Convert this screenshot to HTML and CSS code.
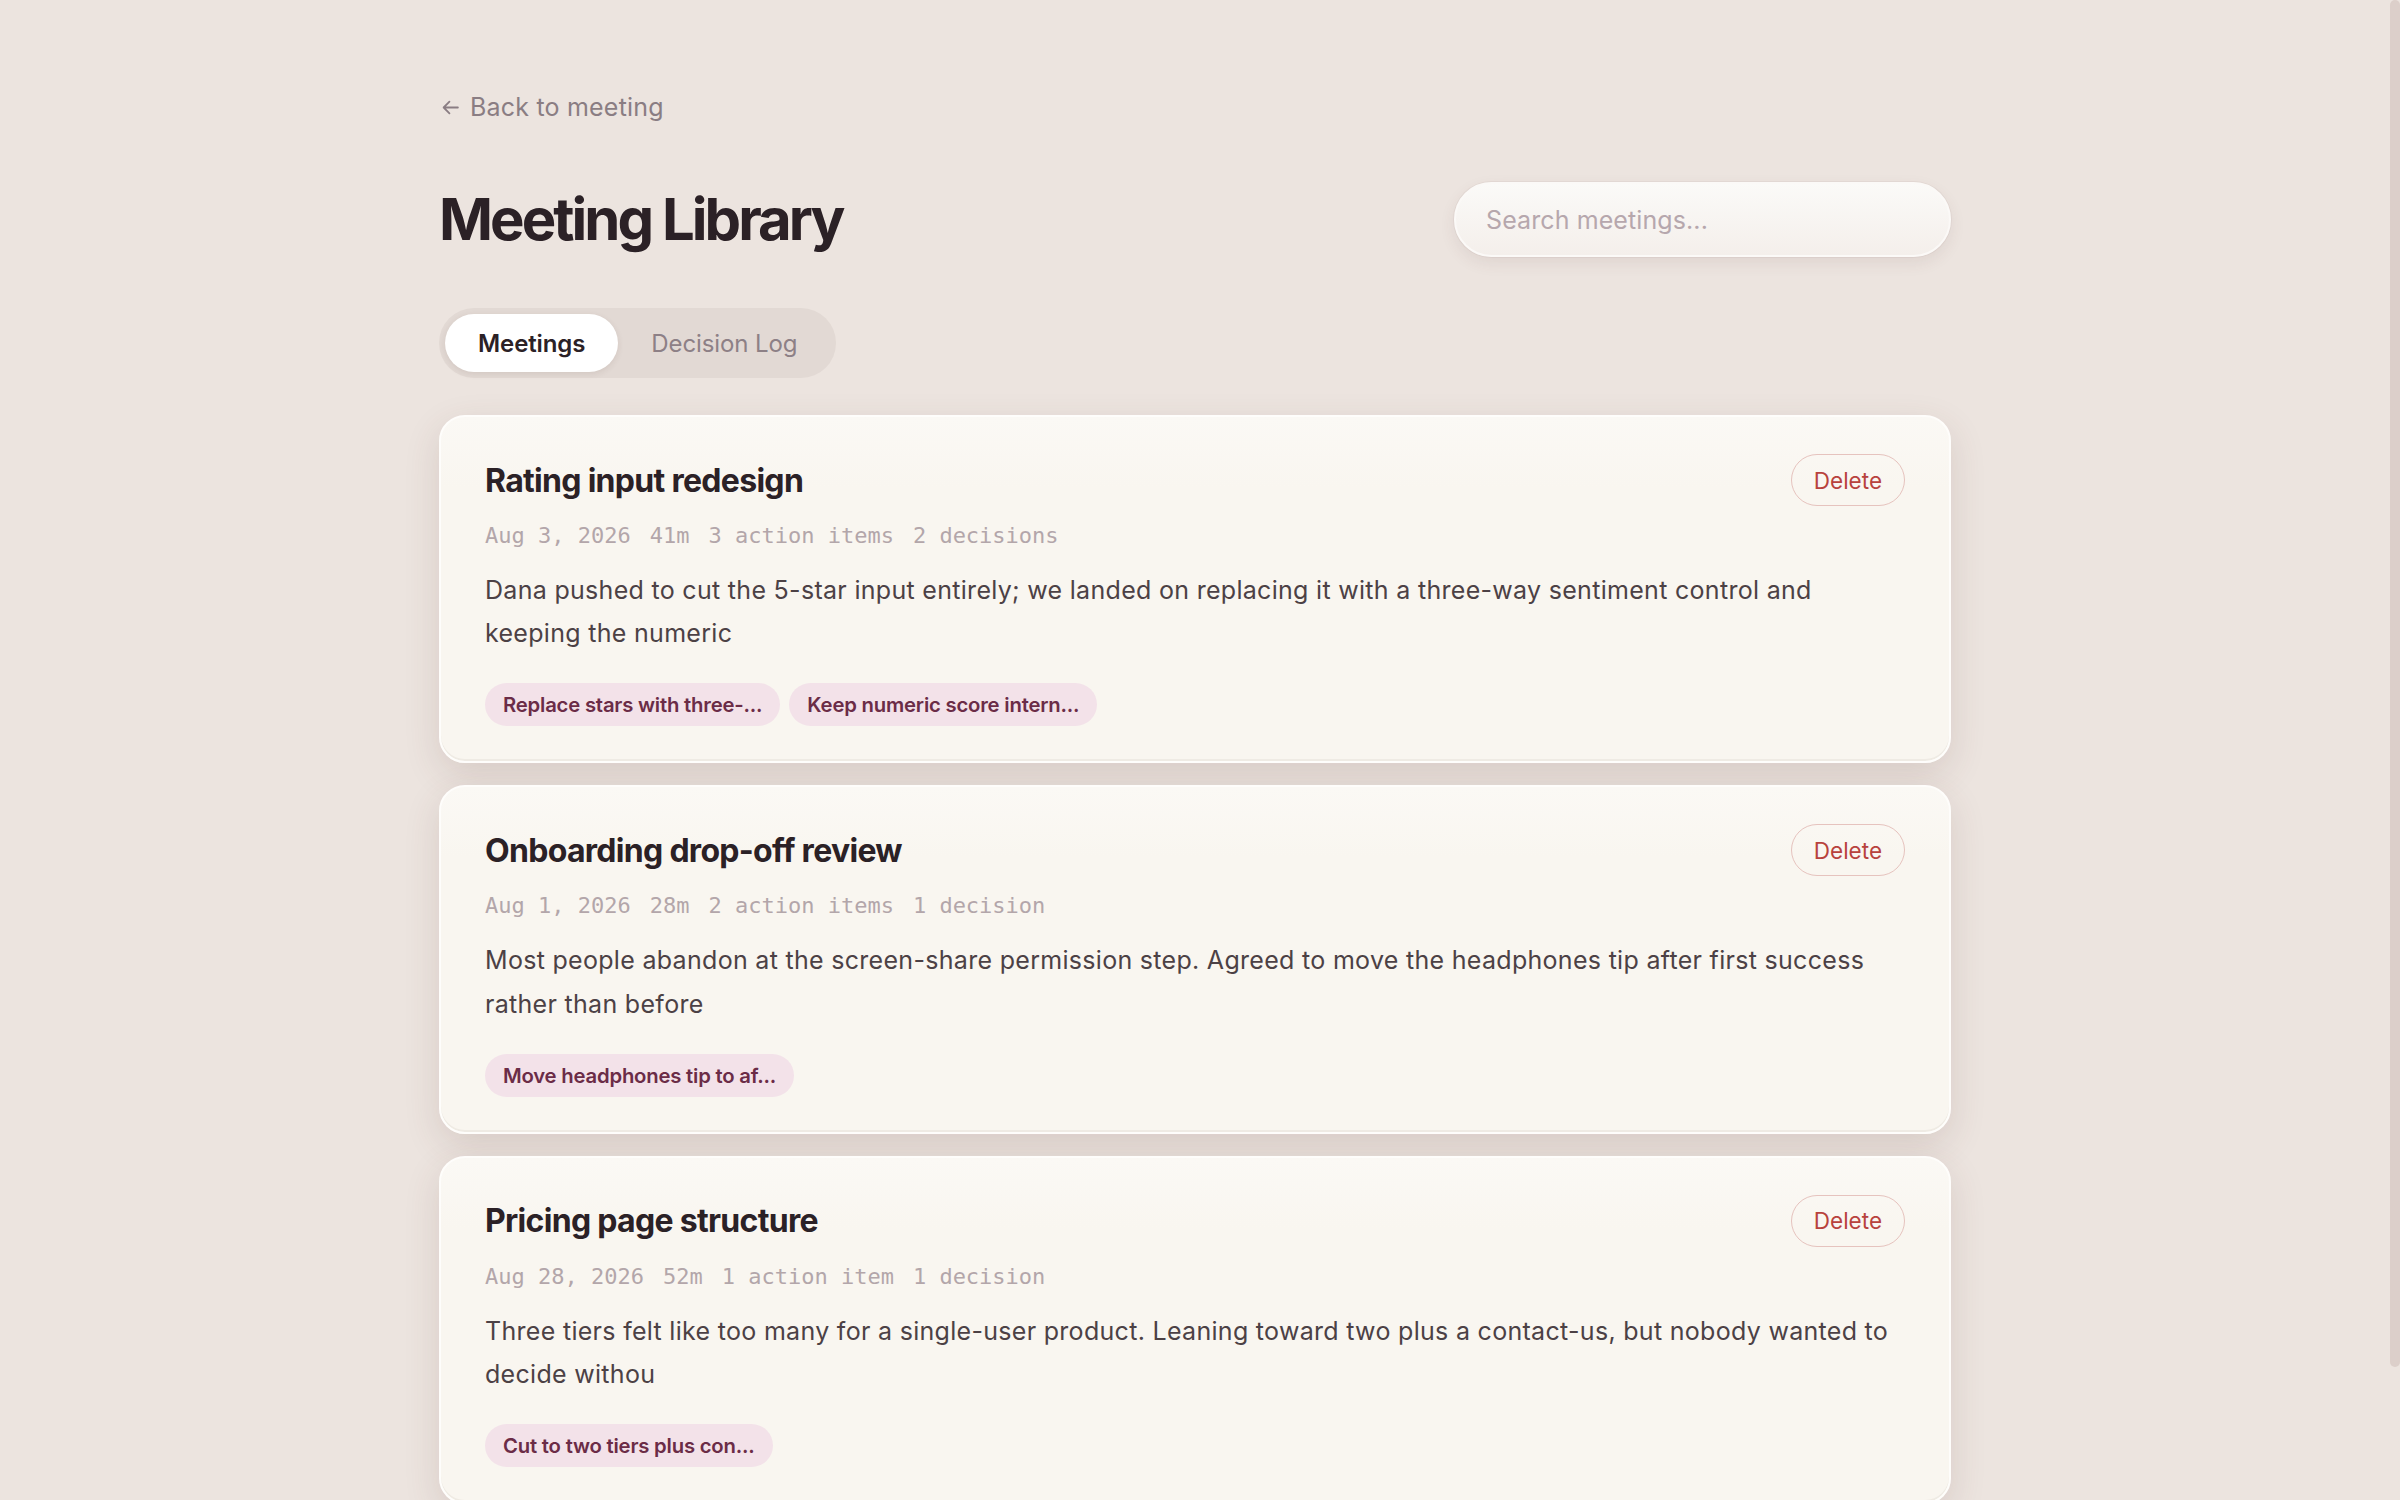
FILE: index.html
```html
<!DOCTYPE html>
<html lang="en">
<head>
<meta charset="utf-8">
<title>Meeting Library</title>
<link rel="stylesheet" href="styles.css">
</head>
<body>
<div class="scroll-thumb" aria-hidden="true"></div>
<main class="page">
  <a class="back-link" href="#">
    <svg class="back-icon" viewBox="0 0 18 18" aria-hidden="true"><path d="M16 9H2.5M8 3.5L2.5 9L8 14.5" fill="none" stroke="currentColor" stroke-width="1.7" stroke-linecap="round" stroke-linejoin="round"/></svg>
    <span>Back to meeting</span>
  </a>

  <header class="header">
    <h1 class="title">Meeting Library</h1>
    <input class="search" type="text" placeholder="Search meetings...">
  </header>

  <nav class="tabs">
    <button class="tab tab-active">Meetings</button>
    <button class="tab">Decision Log</button>
  </nav>

  <section class="list">
    <article class="card">
      <div class="card-head">
        <h2 class="card-title">Rating input redesign</h2>
        <button class="delete">Delete</button>
      </div>
      <div class="meta"><span>Aug 3, 2026</span><span>41m</span><span>3 action items</span><span>2 decisions</span></div>
      <p class="summary">Dana pushed to cut the 5-star input entirely; we landed on replacing it with a three-way sentiment control and keeping the numeric</p>
      <div class="chips"><span class="chip">Replace stars with three-...</span><span class="chip">Keep numeric score intern...</span></div>
    </article>

    <article class="card">
      <div class="card-head">
        <h2 class="card-title">Onboarding drop-off review</h2>
        <button class="delete">Delete</button>
      </div>
      <div class="meta"><span>Aug 1, 2026</span><span>28m</span><span>2 action items</span><span>1 decision</span></div>
      <p class="summary">Most people abandon at the screen-share permission step. Agreed to move the headphones tip after first success rather than before</p>
      <div class="chips"><span class="chip">Move headphones tip to af...</span></div>
    </article>

    <article class="card">
      <div class="card-head">
        <h2 class="card-title">Pricing page structure</h2>
        <button class="delete">Delete</button>
      </div>
      <div class="meta"><span>Aug 28, 2026</span><span>52m</span><span>1 action item</span><span>1 decision</span></div>
      <p class="summary">Three tiers felt like too many for a single-user product. Leaning toward two plus a contact-us, but nobody wanted to decide withou</p>
      <div class="chips"><span class="chip">Cut to two tiers plus con...</span></div>
    </article>
  </section>
</main>
</body>
</html>
```

FILE: styles.css
```css
* { box-sizing: border-box; }

html { background: #ece4df; }

body {
  margin: 0;
  padding-right: 10px; /* room for the scroll thumb */
  background: #ece4df;
  font-family: Inter, "DejaVu Sans", sans-serif;
  color: #2b2126;
}

/* slim page scroll indicator on the right edge */
.scroll-thumb {
  position: fixed;
  top: 0;
  right: 0;
  width: 10px;
  height: 1367px;
  border-radius: 5px;
  background: #dccfca;
}

.page {
  max-width: 1512px;
  margin: 0 auto;
  padding: 89px 0 144px;
}

/* back link */
.back-link {
  display: inline-flex;
  align-items: center;
  gap: 10px;
  height: 36px;
  color: #8a7d83;
  text-decoration: none;
  font-size: 25px;
  letter-spacing: 0.2px;
}
.back-icon { width: 19px; height: 19px; margin-left: 2px; }

/* title row */
.header {
  display: flex;
  align-items: center;
  justify-content: space-between;
  margin-top: 57px;
}
.title {
  margin: 0;
  font-size: 58px;
  line-height: 75px;
  font-weight: 700;
  letter-spacing: -2.95px;
  color: #2b2126;
}
.search {
  width: 497px;
  height: 75px;
  padding: 0 30px;
  border: 2px solid #fbf9f7;
  border-radius: 999px;
  background: linear-gradient(180deg, #fbfaf8 0%, #f4efeb 100%);
  box-shadow: 0 0 0 1px rgba(120, 90, 80, 0.06), 0 6px 16px rgba(90, 60, 50, 0.09);
  font-family: inherit;
  font-size: 25px;
  letter-spacing: 0.1px;
  color: #2b2126;
  outline: none;
}
.search::placeholder { color: #b6a7ad; }

/* tabs */
.tabs {
  display: inline-flex;
  margin-top: 51px;
  padding: 6px;
  background: #e2d9d4;
  border-radius: 999px;
}
.tab {
  height: 58px;
  padding: 0 33px;
  border: 0;
  border-radius: 999px;
  background: transparent;
  font-family: inherit;
  font-size: 24px;
  letter-spacing: -0.1px;
  color: #8d8086;
}
.tab-active {
  background: #fff;
  color: #2b2126;
  font-weight: 600;
  box-shadow: 0 2px 6px rgba(80, 50, 40, 0.1);
}

/* meeting cards */
.list {
  display: flex;
  flex-direction: column;
  gap: 22px;
  margin-top: 37px;
}
.card {
  padding: 37px 44px 35px;
  border: 2px solid #fefdfb;
  border-radius: 26px;
  background: linear-gradient(180deg, #fbf9f5 0px, #f9f6f0 70px);
  box-shadow: inset 0 -2px 0 #efebe4, 0 12px 36px rgba(90, 60, 50, 0.14);
}
.card-head {
  display: flex;
  align-items: center;
  justify-content: space-between;
}
.card-title {
  margin: 0;
  font-size: 32px;
  font-weight: 700;
  letter-spacing: -0.7px;
  color: #2b2126;
}
.delete {
  height: 52px;
  padding: 0 22px;
  border: 1.5px solid #e6c3be;
  border-radius: 999px;
  background: transparent;
  font-family: inherit;
  font-size: 22.5px;
  letter-spacing: 0;
  color: #b8423d;
}
.meta {
  display: flex;
  gap: 19px;
  margin-top: 15px;
  font-family: "DejaVu Sans Mono", "Liberation Mono", monospace;
  font-size: 22px;
  line-height: 30px;
  color: #b3a6aa;
}
.summary {
  max-width: 1412px;
  margin: 18px 0 0;
  font-size: 25px;
  line-height: 43.2px;
  letter-spacing: 0.3px;
  color: #4c4145;
}
.chips {
  display: flex;
  gap: 9px;
  margin-top: 28px;
}
.chip {
  display: inline-flex;
  align-items: center;
  height: 43px;
  padding: 0 18px;
  border-radius: 999px;
  background: #f3e2e9;
  font-size: 20.3px;
  font-weight: 600;
  letter-spacing: -0.2px;
  color: #6b2c47;
}
```
